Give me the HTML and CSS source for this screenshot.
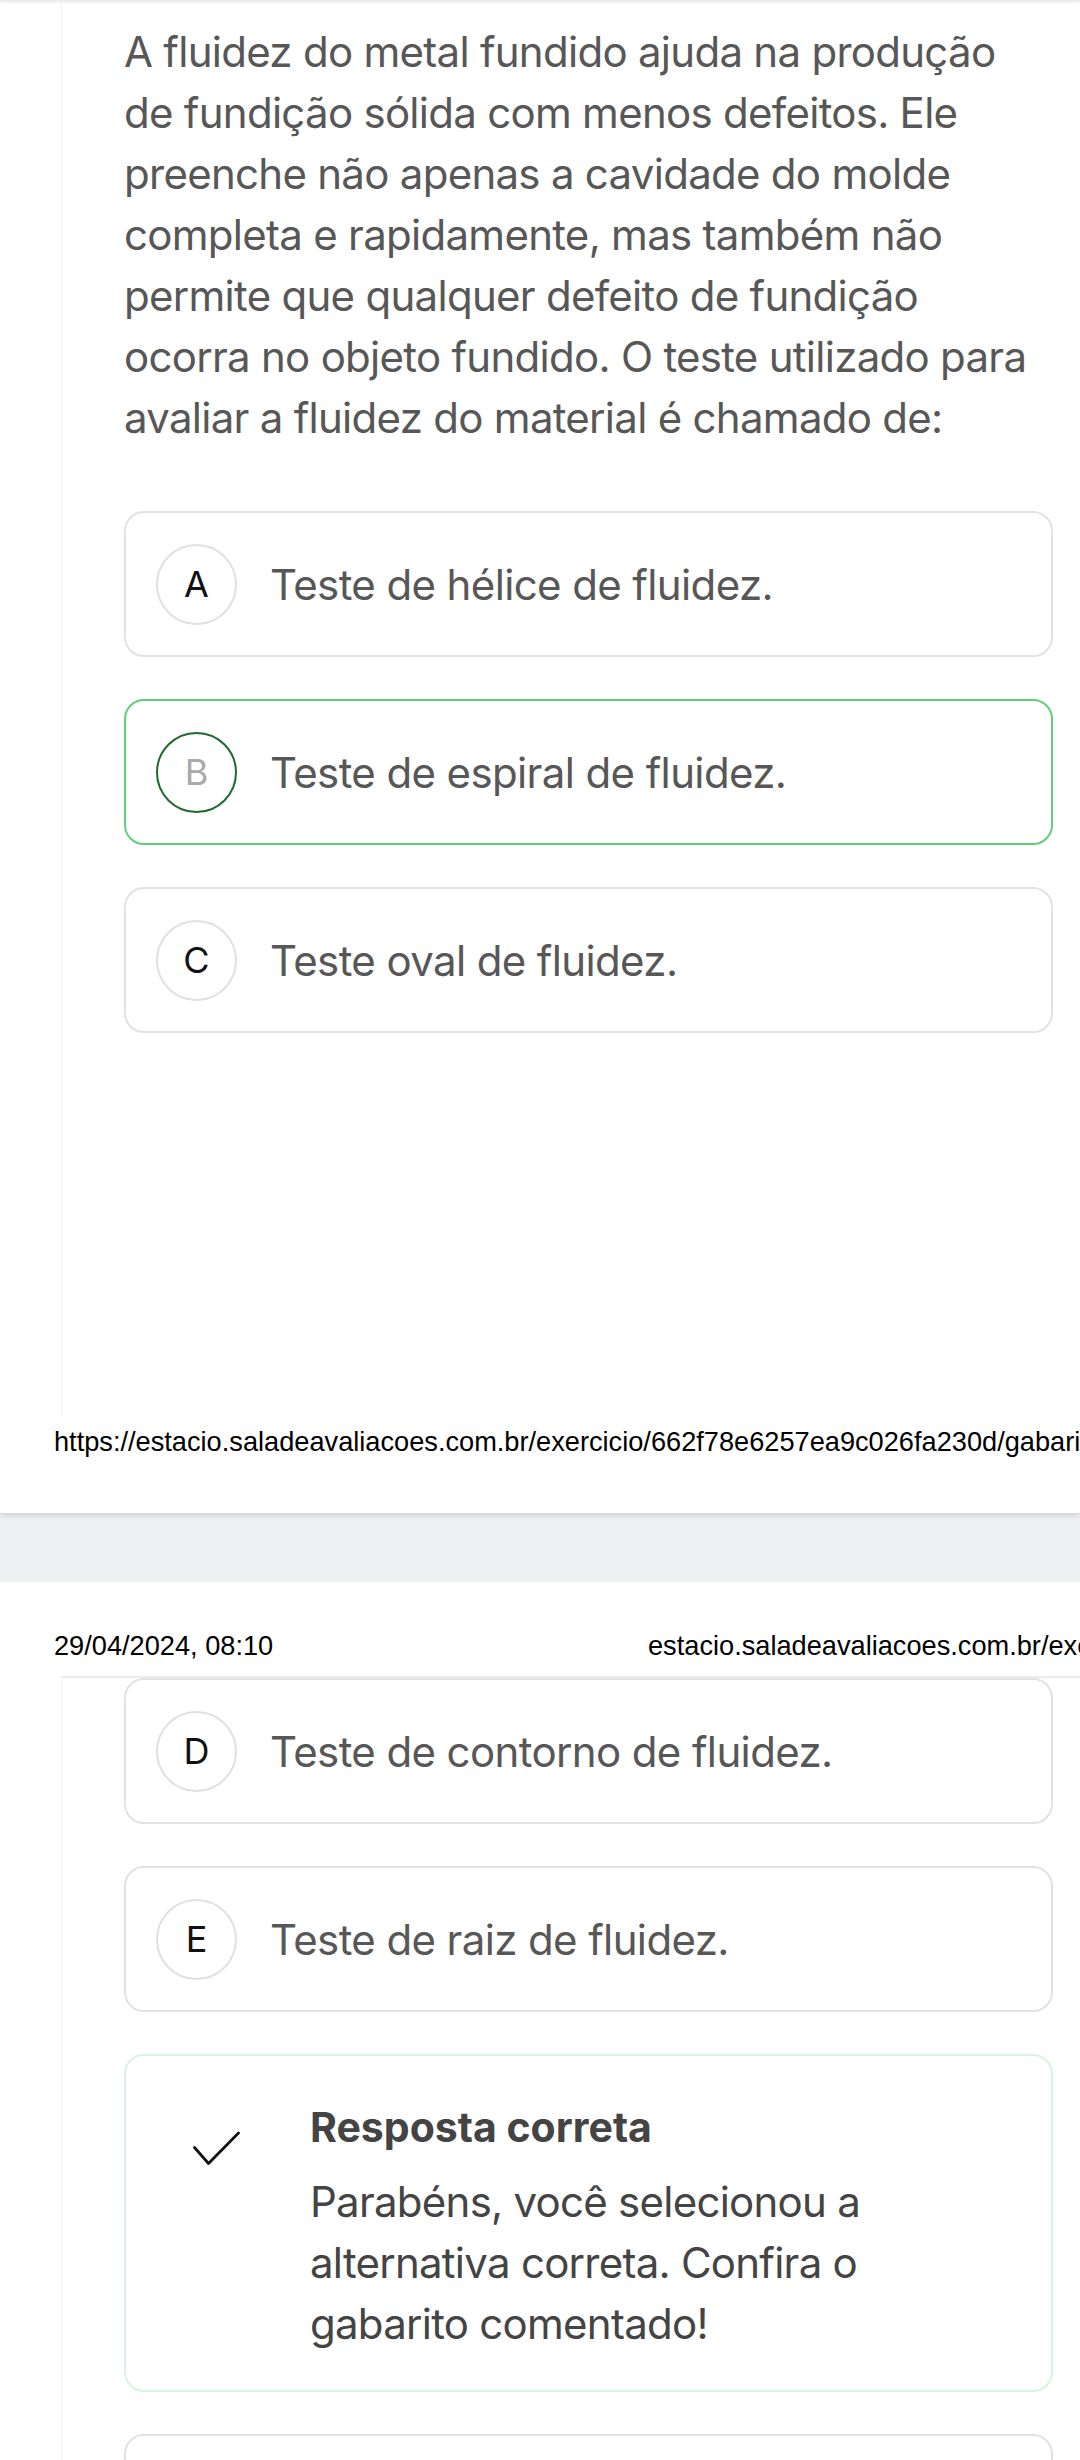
FILE: index.html
```html
<!DOCTYPE html>
<html lang="pt-BR">
<head>
<meta charset="utf-8">
<title>Exercício - gabarito</title>
<link rel="stylesheet" href="styles.css">
</head>
<body>
<div class="viewer">
  <section class="page page-first">
    <div class="frame frame-first">
      <p class="question">A fluidez do metal fundido ajuda na produção de fundição sólida com menos defeitos. Ele preenche não apenas a cavidade do molde completa e rapidamente, mas também não permite que qualquer defeito de fundição ocorra no objeto fundido. O teste utilizado para avaliar a fluidez do material é chamado de:</p>
      <div class="options">
        <div class="option">
          <span class="letter">A</span>
          <span class="option-text">Teste de hélice de fluidez.</span>
        </div>
        <div class="option option-selected">
          <span class="letter">B</span>
          <span class="option-text">Teste de espiral de fluidez.</span>
        </div>
        <div class="option">
          <span class="letter">C</span>
          <span class="option-text">Teste oval de fluidez.</span>
        </div>
      </div>
    </div>
    <div class="print-footer">https://estacio.saladeavaliacoes.com.br/exercicio/662f78e6257ea9c026fa230d/gabarito</div>
  </section>

  <div class="page-gap"></div>

  <section class="page page-second">
    <div class="print-header">
      <span class="print-date">29/04/2024, 08:10</span>
      <span class="print-url">estacio.saladeavaliacoes.com.br/exercicio/662f78e6257ea9c026fa230d/gabarito</span>
    </div>
    <div class="frame frame-second">
      <div class="options">
        <div class="option">
          <span class="letter">D</span>
          <span class="option-text">Teste de contorno de fluidez.</span>
        </div>
        <div class="option">
          <span class="letter">E</span>
          <span class="option-text">Teste de raiz de fluidez.</span>
        </div>
        <div class="feedback">
          <svg class="feedback-icon" viewBox="0 0 48 48" width="48" height="48" aria-hidden="true">
            <polyline points="2.5,23.5 16.5,39.5 46.5,9" fill="none" stroke="#111" stroke-width="2.8" stroke-linecap="round" stroke-linejoin="round"/>
          </svg>
          <div class="feedback-body">
            <h3 class="feedback-title">Resposta correta</h3>
            <p class="feedback-text">Parabéns, você selecionou a alternativa correta. Confira o gabarito comentado!</p>
          </div>
        </div>
        <div class="option option-next"></div>
      </div>
    </div>
  </section>
</div>
</body>
</html>
```

FILE: styles.css
```css
html, body {
  margin: 0;
  padding: 0;
}

body {
  width: 1080px;
  height: 2460px;
  overflow: hidden;
  background: #eff0f2;
  font-family: Inter, "Noto Sans", sans-serif;
}

.viewer {
  display: flex;
  flex-direction: column;
}

.page {
  background: #ffffff;
  overflow: hidden;
  flex: none;
}

.page-first {
  height: 1513px;
  display: flex;
  flex-direction: column;
  box-shadow: inset 0 4px 4px -3px rgba(0, 0, 0, 0.14), 0 3px 5px rgba(0, 0, 0, 0.13);
  position: relative;
  z-index: 1;
}

.page-gap {
  height: 69px;
  flex: none;
  background: #eff0f2;
}

.page-second {
  height: 878px;
  display: flex;
  flex-direction: column;
}

.frame {
  margin-left: 61px;
  border-left: 1px solid #f1f1f1;
  padding-left: 62px;
  padding-right: 27px;
  flex: none;
}

.frame-first {
  height: 1396px;
  padding-top: 21px;
}

.frame-second {
  border-top: 2px solid #ececec;
}

.question {
  margin: 0;
  width: 918px;
  font-size: 42px;
  line-height: 61px;
  color: #575757;
  letter-spacing: -0.72px;
}

.options {
  display: flex;
  flex-direction: column;
  gap: 42px;
}

.frame-first .options {
  margin-top: 63px;
}

.option {
  box-sizing: border-box;
  height: 146px;
  flex: none;
  border: 2px solid #e2e2e2;
  border-radius: 20px;
  display: flex;
  align-items: center;
  padding: 0 30px;
  background: #fff;
}

.option-selected {
  border-color: #5fd07a;
}

.letter {
  box-sizing: border-box;
  width: 81px;
  height: 81px;
  flex: none;
  border: 2px solid #e0e0e0;
  border-radius: 50%;
  display: flex;
  align-items: center;
  justify-content: center;
  font-size: 36px;
  color: #111;
  margin-right: 33px;
}

.option-selected .letter {
  border-color: #1d6a2f;
  color: #aaaaaa;
}

.option-text {
  font-size: 42px;
  line-height: 61px;
  color: #575757;
  letter-spacing: -0.62px;
}

.option-next {
  height: 60px;
}

.feedback {
  box-sizing: border-box;
  height: 338px;
  flex: none;
  border: 2px solid #d6f5de;
  border-radius: 20px;
  display: flex;
  align-items: flex-start;
  padding: 45px 32px 0 66px;
}

.feedback-icon {
  flex: none;
  margin-top: 23px;
  margin-right: 70px;
}

.feedback-body {
  width: 600px;
}

.feedback-title {
  margin: 0 0 18px;
  font-size: 41px;
  line-height: 52px;
  font-weight: 700;
  color: #444444;
}

.feedback-text {
  margin: 0;
  font-size: 42px;
  line-height: 61px;
  color: #444444;
  letter-spacing: -0.74px;
}

.print-footer,
.print-header {
  font-family: "Liberation Sans", Arial, sans-serif;
  font-size: 27.2px;
  line-height: 32px;
  color: #000;
  white-space: nowrap;
}

.print-footer {
  padding: 9px 0 0 54px;
}

.print-header {
  height: 94px;
  flex: none;
  box-sizing: border-box;
  padding: 48px 0 0 54px;
  display: grid;
  grid-template-columns: 594px max-content;
}
```
